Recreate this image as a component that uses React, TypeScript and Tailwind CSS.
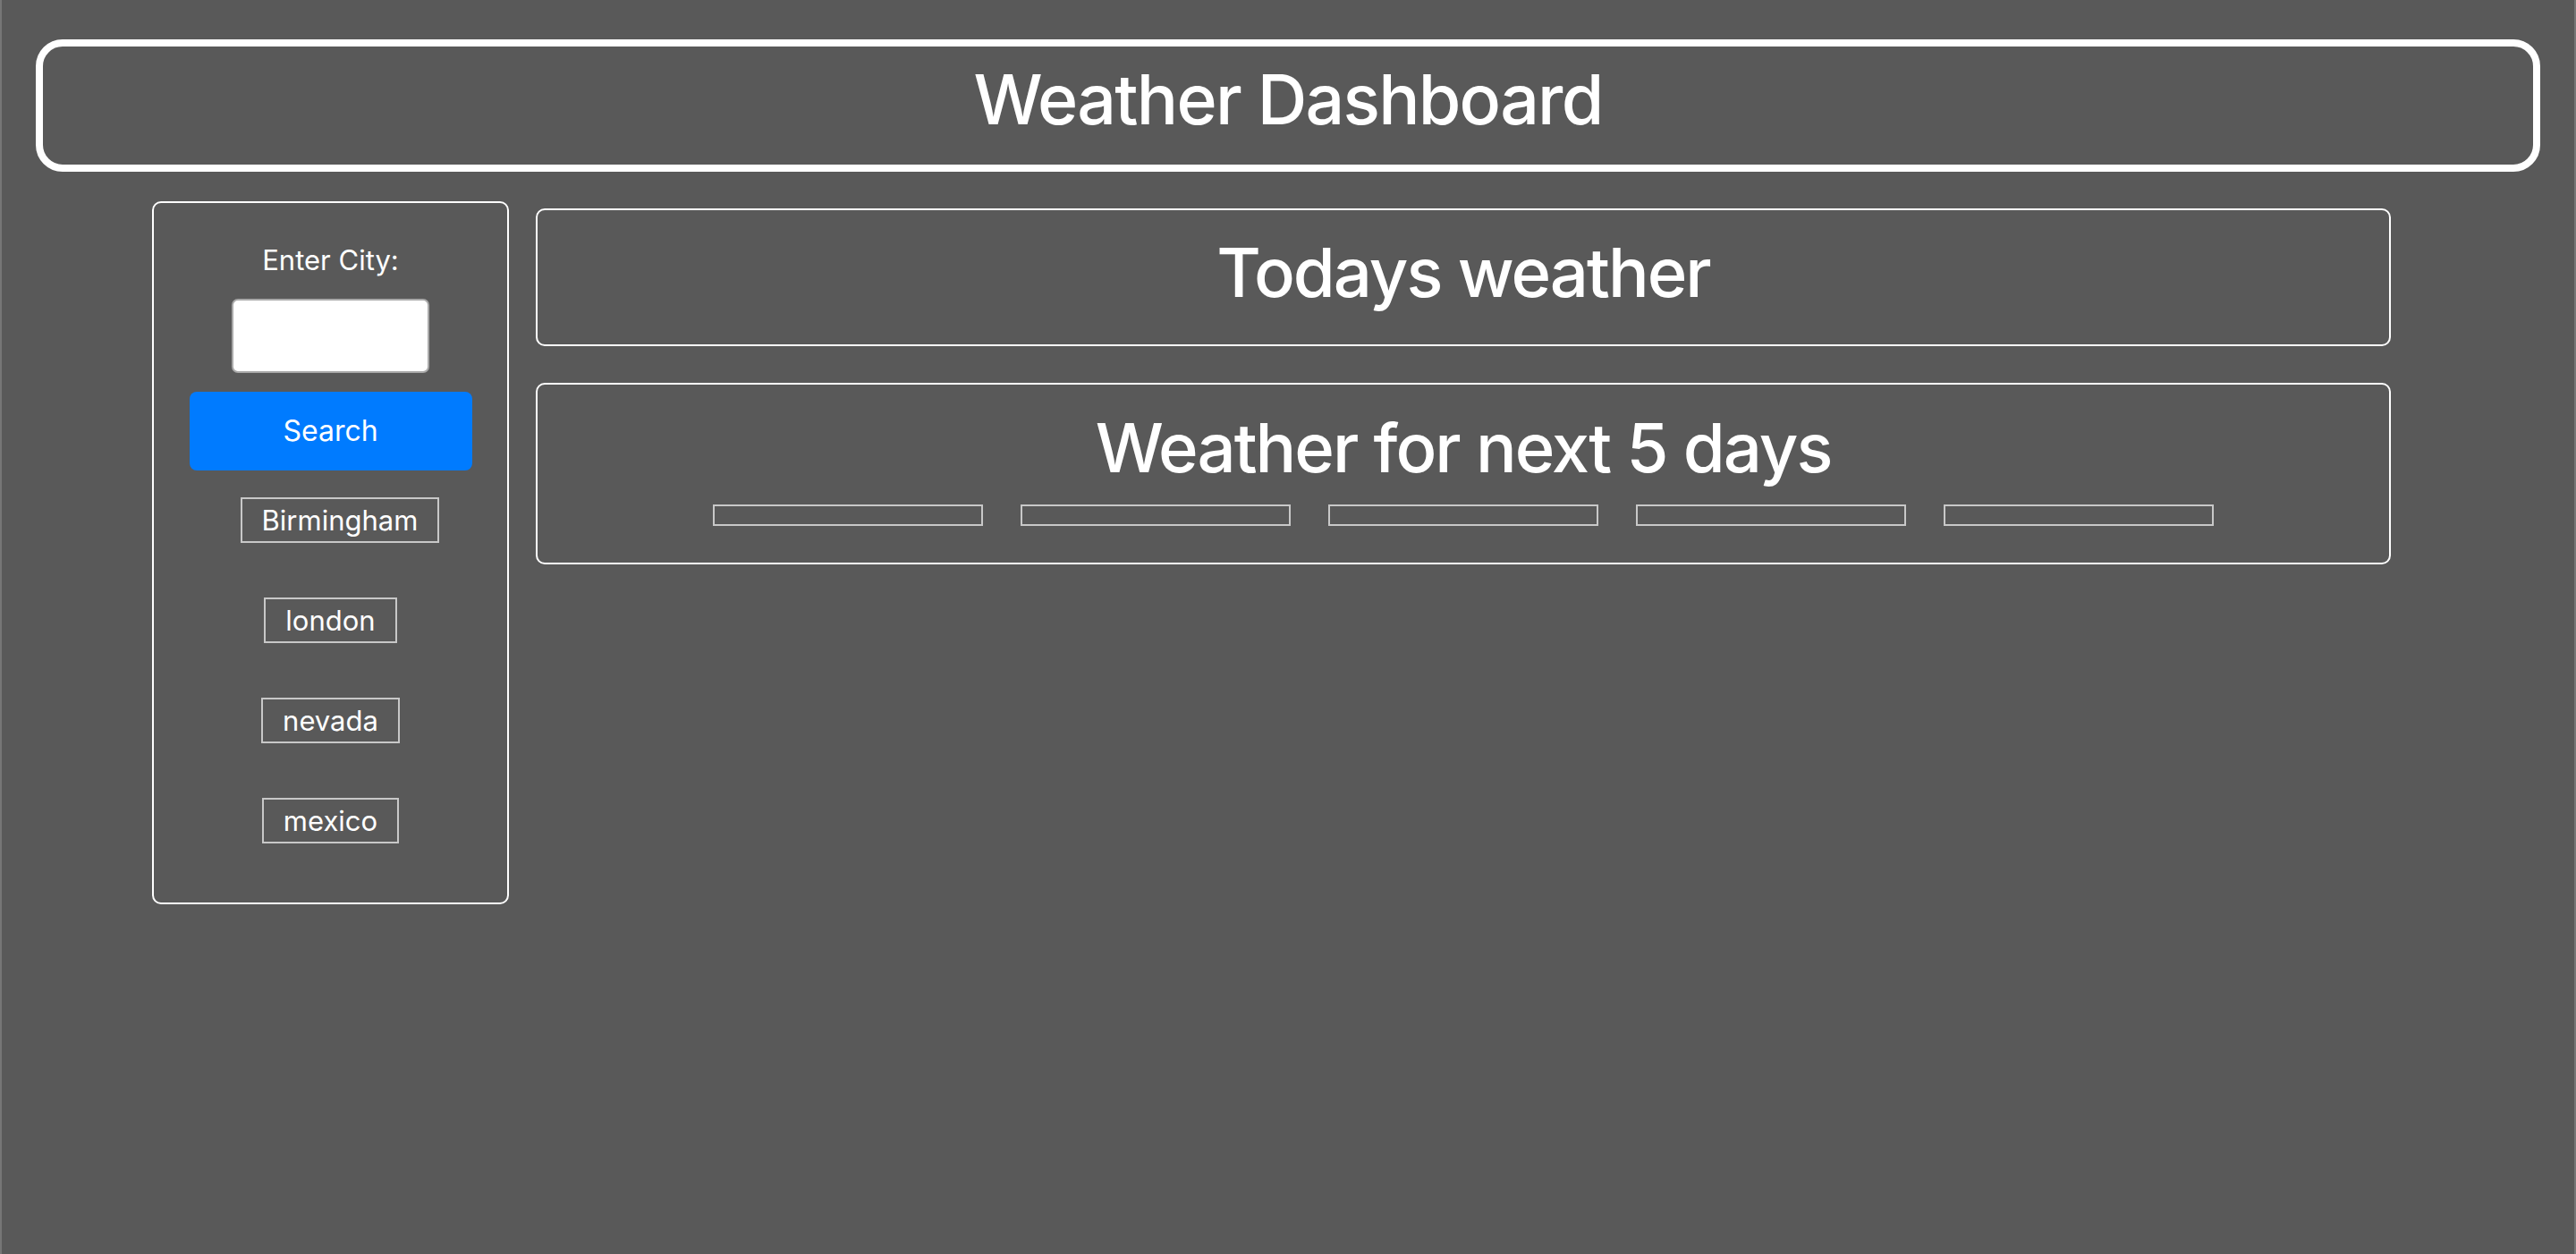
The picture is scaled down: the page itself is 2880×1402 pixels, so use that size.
import { useState } from 'react'

const cities = ['Birmingham', 'london', 'nevada', 'mexico']

export default function App() {
  const [city, setCity] = useState('')

  return (
    <div
      className="min-h-[1402px] w-full border-x-2 border-[#767676] bg-[#595959] text-white"
      style={{ fontFamily: 'Inter, "Noto Sans", sans-serif' }}
    >
      <div className="px-[38px] pt-[44px]">
        <header className="h-[148px] rounded-[30px] border-[8px] border-white pt-[11px] text-center">
          <h1 className="text-[77px] leading-[96px] font-medium tracking-[-1.75px]">Weather Dashboard</h1>
        </header>
      </div>

      <div className="mt-[33px] flex items-start pl-[168px]">
        <aside className="flex h-[786px] w-[399px] flex-col items-center rounded-[10px] border-2 border-white pt-[40px]">
          <label className="text-[31px] leading-[48px]">Enter City:</label>
          <input
            value={city}
            onChange={(e) => setCity(e.target.value)}
            className="mt-[19px] h-[83px] w-[221px] rounded-[7px] border-2 border-[#a9a9a9] bg-white px-3 text-[30px] text-black outline-none"
          />
          <button className="mt-[21px] h-[88px] w-[316px] rounded-[8px] bg-[#007bff] text-[32px] text-white">
            Search
          </button>
          <div className="mt-[30px] flex flex-col items-center gap-[61px]">
            {cities.map((c, i) => (
              <button
                key={c}
                className={`flex h-[51px] items-center border-2 border-[#c8c8c8] px-[22px] text-[31px] leading-none text-white ${i === 0 ? 'ml-[21px]' : ''}`}
              >
                {c}
              </button>
            ))}
          </div>
        </aside>

        <main className="ml-[30px] mt-[8px] flex w-[2074px] flex-col gap-[41px]">
          <section className="h-[154px] rounded-[10px] border-2 border-white pt-[21px] text-center">
            <h2 className="text-[76px] leading-[96px] font-medium tracking-[-2px]">Todays weather</h2>
          </section>
          <section className="h-[203px] rounded-[10px] border-2 border-white pt-[22px] text-center">
            <h2 className="text-[76px] leading-[96px] font-medium tracking-[-2px]">Weather for next 5 days</h2>
            <div className="mt-[16px] flex justify-center gap-[42px]">
              {[0, 1, 2, 3, 4].map((d) => (
                <div key={d} className="h-[24px] w-[302px] border-2 border-[#c8c8c8]" />
              ))}
            </div>
          </section>
        </main>
      </div>
    </div>
  )
}
